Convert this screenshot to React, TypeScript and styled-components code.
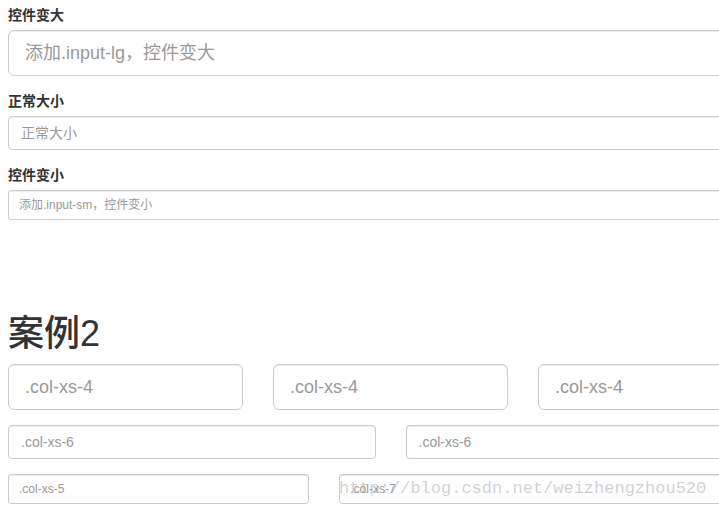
import React from "react";
import styled, { createGlobalStyle, css } from "styled-components";

const GlobalStyle = createGlobalStyle`
  html, body {
    margin: 0;
    padding: 0;
    background: #fff;
    overflow: hidden;
  }
  body {
    font-family: "Liberation Sans", "Noto Sans CJK SC", sans-serif;
    font-size: 14px;
    line-height: 1.42857;
    color: #333;
  }
  * { box-sizing: border-box; }
  input::placeholder { color: #999; opacity: 1; }
`;

type Size = "lg" | "md" | "sm";

const Page = styled.div`
  position: relative;
  width: 719px;
  height: 508px;
  padding: 5px 0 0 8px;
`;

const FormGroup = styled.div`
  margin-bottom: 15px;
`;

const Label = styled.label`
  display: block;
  font-weight: bold;
  font-size: 14px;
  line-height: 20px;
  margin-bottom: 5px;
  color: #333;
`;

const sizes = {
  lg: css`
    height: 46px;
    padding: 10px 16px;
    font-size: 18px;
    border-radius: 6px;
  `,
  md: css`
    height: 34px;
    padding: 6px 12px;
    font-size: 14px;
    border-radius: 4px;
  `,
  sm: css`
    height: 30px;
    padding: 5px 10px;
    font-size: 12px;
    border-radius: 3px;
  `,
};

const Input = styled.input<{ $size: Size; $wide?: boolean }>`
  display: block;
  width: ${(p) => (p.$wide ? "765px" : "100%")};
  border: 1px solid #ccc;
  background: #fff;
  color: #555;
  font-family: "Liberation Sans", "Noto Sans CJK SC", sans-serif;
  box-shadow: inset 0 1px 1px rgba(0, 0, 0, 0.075);
  outline: none;
  ${(p) => sizes[p.$size]}
`;

const Heading = styled.h1`
  margin: 94px 0 10px;
  font-size: 36px;
  line-height: 40px;
  font-weight: 500;
  color: #333;
`;

const Row = styled.div`
  display: flex;
  width: 795px;
  margin-left: -15px;
  margin-bottom: 15px;
`;

const Col = styled.div<{ $span: number }>`
  flex: 0 0 ${(p) => (p.$span / 12) * 100}%;
  padding: 0 15px;
`;

const Watermark = styled.div`
  position: absolute;
  left: 339px;
  top: 478px;
  font-family: "Liberation Mono", "DejaVu Sans Mono", monospace;
  font-size: 17px;
  line-height: 22px;
  color: rgba(150, 150, 150, 0.45);
  white-space: nowrap;
  pointer-events: none;
`;

export default function App() {
  return (
    <>
      <GlobalStyle />
      <Page>
        <FormGroup>
          <Label>控件变大</Label>
          <Input $size="lg" $wide placeholder="添加.input-lg，控件变大" />
        </FormGroup>
        <FormGroup>
          <Label>正常大小</Label>
          <Input $size="md" $wide placeholder="正常大小" />
        </FormGroup>
        <FormGroup>
          <Label>控件变小</Label>
          <Input $size="sm" $wide placeholder="添加.input-sm，控件变小" />
        </FormGroup>

        <Heading>案例2</Heading>
        <Row>
          <Col $span={4}>
            <Input $size="lg" placeholder=".col-xs-4" />
          </Col>
          <Col $span={4}>
            <Input $size="lg" placeholder=".col-xs-4" />
          </Col>
          <Col $span={4}>
            <Input $size="lg" placeholder=".col-xs-4" />
          </Col>
        </Row>
        <Row>
          <Col $span={6}>
            <Input $size="md" placeholder=".col-xs-6" />
          </Col>
          <Col $span={6}>
            <Input $size="md" placeholder=".col-xs-6" />
          </Col>
        </Row>
        <Row>
          <Col $span={5}>
            <Input $size="sm" placeholder=".col-xs-5" />
          </Col>
          <Col $span={7}>
            <Input $size="sm" placeholder=".col-xs-7" />
          </Col>
        </Row>
        <Watermark>http://blog.csdn.net/weizhengzhou520</Watermark>
      </Page>
    </>
  );
}
